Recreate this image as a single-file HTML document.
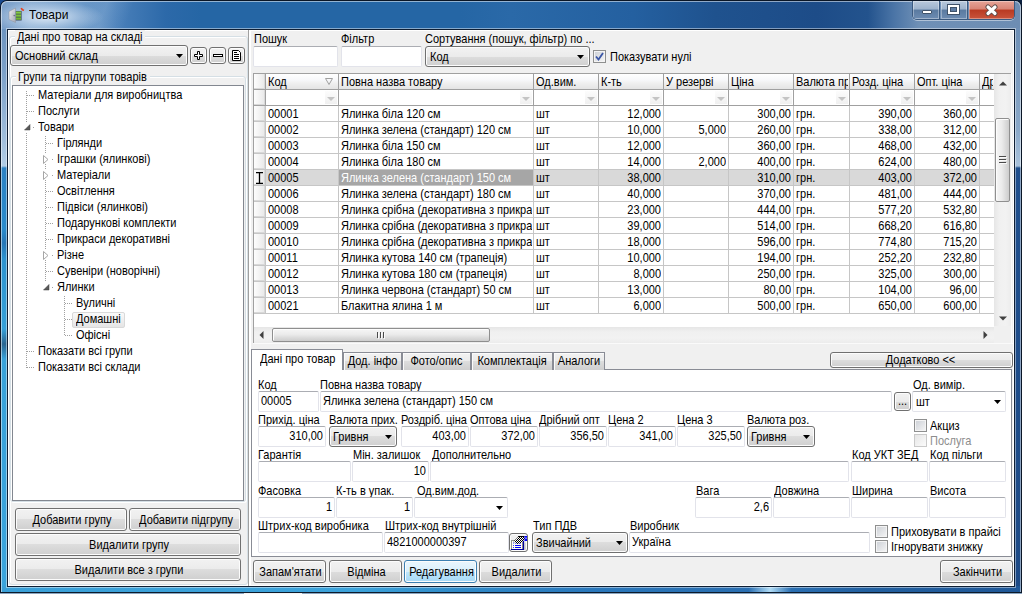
<!DOCTYPE html><html><head><meta charset="utf-8"><title>Товари</title><style>
*{margin:0;padding:0;box-sizing:border-box}
html,body{width:1022px;height:594px;overflow:hidden;background:#c9d3dc}
body{position:relative;font-family:"Liberation Sans",sans-serif;font-size:11px;color:#000}
div{position:absolute}
.t{white-space:nowrap;line-height:13px;transform:scaleY(1.12);transform-origin:0 10.3px}
.inp{background:#fff;border:1px solid #e2e3ea;border-top-color:#abadb3;border-radius:2px}
.btn{border:1px solid #707070;border-radius:3px;background:linear-gradient(#f2f2f2 0,#ebebeb 50%,#dddddd 50%,#cfcfcf 100%);box-shadow:inset 0 0 0 1px #fcfcfc}
.btnh{border:1px solid #3c7fb1;border-radius:3px;background:linear-gradient(#eaf6fd 0,#d9f0fc 50%,#bee6fd 50%,#a7d9f5 100%);box-shadow:inset 0 0 0 1px #fcfcfc}
.cb{border:1px solid #8e8f8f;background:linear-gradient(135deg,#cbcfd5,#f6f6f6);box-shadow:inset 0 0 0 1px #f4f4f4}
.ctr{text-align:center}
</style></head><body>
<div style="left:0px;top:593px;width:1022px;height:1px;background:#8aa5c0"></div>
<div style="left:244px;top:593px;width:58px;height:1px;background:#f4f4f4"></div>
<div style="left:0px;top:0px;width:12px;height:12px;background:#1a4a90"></div>
<div style="left:1010px;top:0px;width:12px;height:12px;background:#0a2040"></div>
<div style="left:0px;top:0px;width:1022px;height:593px;background:#0a1626;border-radius:7px 7px 0 0"></div>
<div style="left:1px;top:1px;width:1020px;height:591px;border-radius:6px 6px 0 0;background:linear-gradient(90deg,#7b9fc9 0,#8db0d5 30px,#6d9ac9 80px,#4a80ba 115px,#2c69a9 165px,#2566a5 200px,#2566a5 45%,#2a69a8 50%,#2460a0 62%,#1f528e 70%,#1d4c88 80%,#23538d 85%,#4a74a6 87.5%,#6f90b6 90%,#6d8db3 100%)"></div>
<div style="left:60px;top:1px;width:140px;height:27px;background:linear-gradient(110deg,rgba(255,255,255,0) 25px,rgba(220,235,250,.15) 45px,rgba(255,255,255,0) 70px)"></div>
<div style="left:0px;top:0px;width:140px;height:29px;background:radial-gradient(ellipse 56px 16px at 34% 58%,rgba(230,239,250,.9) 0,rgba(200,218,238,.5) 55%,rgba(160,190,220,0) 100%)"></div>
<div style="left:1px;top:29px;width:6px;height:564px;background:linear-gradient(#6c94c0 0,#7aa0c8 40px,#9fbedc 110px,#b2cde6 137px,#2c82c4 139px,#2a8bcb 200px,#2676b6 214px,#2d93cf 230px,#35a0d8 300px,#2a6590 315px,#38a2da 330px,#3aa4dc 100%)"></div>
<div style="left:1015px;top:29px;width:6px;height:564px;background:linear-gradient(#6e8fb5 0,#8aa8c8 100px,#a9c2db 137px,#1f4f8d 139px,#1d4a86 100%)"></div>
<div style="left:1px;top:586px;width:1020px;height:7px;background:linear-gradient(90deg,#3aa0d8 0,#3ba2da 35%,#2f8ac8 45%,#2a78bc 58%,#2a70b2 70%,#2a6fb2 73.3%,#b0dcf6 75.4%,#2a6fb2 77.5%,#2260a0 85%,#1f5797 100%)"></div>
<div style="left:1px;top:1px;width:1020px;height:591px;border:1px solid rgba(255,255,255,.5);border-bottom:none;border-radius:6px 6px 0 0"></div>
<div style="left:6px;top:28px;width:1010px;height:560px;border:1px solid rgba(255,255,255,.45)"></div>
<div style="left:0px;top:592px;width:1022px;height:1px;background:#0d1a2a"></div>
<div class="t" style="left:29px;top:8px;font-size:12px;line-height:15px;color:#000">Товари</div>
<svg style="position:absolute;left:8px;top:7px" width="17" height="17" viewBox="0 0 17 17">
<defs><linearGradient id="dg" x1="0" y1="0" x2="1" y2="1"><stop offset="0" stop-color="#f0f0f4"/><stop offset="1" stop-color="#a4a8b4"/></linearGradient></defs>
<path d="M1 4.5 L7.5 1 L7.5 15.5 L1 12.5 Z" fill="url(#dg)" stroke="#8c909c" stroke-width=".5"/>
<rect x="7.8" y="4" width="5.8" height="9.5" fill="#3c4a5c"/>
<rect x="8" y="4.5" width="5" height="2.2" fill="#84c840"/><rect x="8" y="7.5" width="5" height="2.2" fill="#7cc238"/><rect x="8" y="10.5" width="5" height="2.2" fill="#74b832"/>
<circle cx="6.2" cy="8.6" r=".8" fill="#6a7080"/>
<path d="M12.5 1.2 L14 0.8 L15 2.2 L16.2 2.4 L15.8 3.9 L13.8 3.6 Z" fill="#e8401c"/></svg>
<div style="left:912px;top:1px;width:103px;height:19px;border:1px solid #3b5a80;border-top:none;border-radius:0 0 5px 5px;overflow:hidden;box-shadow:0 1px 0 rgba(255,255,255,.45)"><div style="left:0;top:0;width:27px;height:18px;background:linear-gradient(#b9c9dc 0,#9db3cc 45%,#5a7aa0 50%,#6d8cb2 100%);border-right:1px solid #3b5a80;box-shadow:inset 0 0 0 1px rgba(255,255,255,.35)"></div><div style="left:28px;top:0;width:27px;height:18px;background:linear-gradient(#b9c9dc 0,#9db3cc 45%,#5a7aa0 50%,#6d8cb2 100%);border-right:1px solid #3b5a80;box-shadow:inset 0 0 0 1px rgba(255,255,255,.35)"></div><div style="left:56px;top:0;width:46px;height:18px;background:linear-gradient(#e6a498 0,#d88475 45%,#b93a22 50%,#c9543c 100%);box-shadow:inset 0 0 0 1px rgba(255,255,255,.35)"></div></div>
<div style="left:922px;top:10px;width:10px;height:4px;background:#fff;border:1px solid #40536a;border-radius:1px"></div>
<div style="left:948px;top:5px;width:11px;height:9px;border:2px solid #fff;outline:1px solid #40536a;background:transparent"></div>
<div style="left:950px;top:7px;width:7px;height:5px;background:#5d7ca3;border:1px solid #40536a"></div>
<svg style="position:absolute;left:984px;top:3px" width="15" height="14" viewBox="0 0 15 14"><path d="M4 4 L11 10.5 M11 4 L4 10.5" stroke="#5b4a48" stroke-width="5" stroke-linecap="round"/><path d="M4 4 L11 10.5 M11 4 L4 10.5" stroke="#ffffff" stroke-width="3.2" stroke-linecap="round"/></svg>
<div style="left:7px;top:29px;width:1008px;height:558px;background:#f0f0f0;border:1px solid #0e1e33;box-shadow:inset 1px 1px 0 #ffffff,inset -1px -1px 0 #ffffff"></div>
<div style="left:9px;top:36px;width:239px;height:549px;border:1px solid #d5dfe5;border-radius:3px;box-shadow:inset 1px 1px 0 #fff, 1px 1px 0 #fff"></div>
<div style="left:15px;top:30px;width:130px;height:13px;background:#f0f0f0"></div>
<div class="t" style="left:17px;top:31px;">Дані про товар на складі</div>
<div class="btn" style="left:10px;top:45px;width:178px;height:21px"></div>
<div class="t" style="left:15px;top:50px;">Основний склад</div>
<svg style="position:absolute;left:176px;top:54px" width="7" height="4"><path d="M0 0 H7 L3.5 4 Z" fill="#000"/></svg>
<div class="btn" style="left:190px;top:47px;width:17px;height:17px"></div>
<div class="btn" style="left:209px;top:47px;width:17px;height:17px"></div>
<div class="btn" style="left:228px;top:47px;width:17px;height:17px"></div>
<svg style="position:absolute;left:194px;top:51px" width="9" height="9"><path d="M3.5 0.5 H5.5 V3.5 H8.5 V5.5 H5.5 V8.5 H3.5 V5.5 H0.5 V3.5 H3.5 Z" fill="#fff" stroke="#000" stroke-width="1"/></svg>
<svg style="position:absolute;left:213px;top:54px" width="10" height="4"><rect x="0.5" y="0.5" width="9" height="2" fill="#fff" stroke="#000"/></svg>
<svg style="position:absolute;left:232px;top:50px" width="9" height="11"><path d="M0.5 0.5 H6.5 L8.5 2.5 V10.5 H0.5 Z" fill="#fff" stroke="#000" stroke-width="1"/><path d="M2 2.5 H5 M2 4.5 H7 M2 6.5 H7 M2 8.5 H7" stroke="#000" stroke-width="1"/></svg>
<div style="left:10px;top:76px;width:236px;height:426px;border:1px solid #d5dfe5;border-radius:3px;box-shadow:inset 1px 1px 0 #fff, 1px 1px 0 #fff"></div>
<div style="left:16px;top:70px;width:134px;height:13px;background:#f0f0f0"></div>
<div class="t" style="left:18px;top:71px;">Групи та підгрупи товарів</div>
<div style="left:12px;top:85px;width:232px;height:416px;background:#fff;border:1px solid #828790"></div>
<div style="left:26px;top:91px;width:1px;height:277px;background:repeating-linear-gradient(180deg,#a0a0a0 0,#a0a0a0 1px,transparent 1px,transparent 2px)"></div>
<div style="left:45px;top:136px;width:1px;height:152px;background:repeating-linear-gradient(180deg,#a0a0a0 0,#a0a0a0 1px,transparent 1px,transparent 2px)"></div>
<div style="left:64px;top:296px;width:1px;height:40px;background:repeating-linear-gradient(180deg,#a0a0a0 0,#a0a0a0 1px,transparent 1px,transparent 2px)"></div>
<div style="left:27px;top:95px;width:8px;height:1px;background:repeating-linear-gradient(90deg,#a0a0a0 0,#a0a0a0 1px,transparent 1px,transparent 2px)"></div>
<div class="t" style="left:38px;top:89px;">Матеріали для виробництва</div>
<div style="left:27px;top:111px;width:8px;height:1px;background:repeating-linear-gradient(90deg,#a0a0a0 0,#a0a0a0 1px,transparent 1px,transparent 2px)"></div>
<div class="t" style="left:38px;top:105px;">Послуги</div>
<div style="left:33px;top:127px;width:1px;height:1px;background:#a0a0a0"></div>
<div style="left:23px;top:122px;width:9px;height:10px;background:#fff"></div>
<svg style="position:absolute;left:24px;top:124px" width="7" height="7"><path d="M6 0.5 V6 H0.5 Z" fill="#595959" stroke="#3c3c3c" stroke-width=".5"/></svg>
<div class="t" style="left:38px;top:121px;">Товари</div>
<div style="left:46px;top:143px;width:8px;height:1px;background:repeating-linear-gradient(90deg,#a0a0a0 0,#a0a0a0 1px,transparent 1px,transparent 2px)"></div>
<div class="t" style="left:57px;top:137px;">Гірлянди</div>
<div style="left:52px;top:159px;width:1px;height:1px;background:#a0a0a0"></div>
<div style="left:42px;top:154px;width:9px;height:10px;background:#fff"></div>
<svg style="position:absolute;left:43px;top:155px" width="6" height="9"><path d="M0.5 0.5 L5 4.5 L0.5 8.5 Z" fill="#fff" stroke="#a6a6a6"/></svg>
<div class="t" style="left:57px;top:153px;">Іграшки (ялинкові)</div>
<div style="left:52px;top:175px;width:1px;height:1px;background:#a0a0a0"></div>
<div style="left:42px;top:170px;width:9px;height:10px;background:#fff"></div>
<svg style="position:absolute;left:43px;top:171px" width="6" height="9"><path d="M0.5 0.5 L5 4.5 L0.5 8.5 Z" fill="#fff" stroke="#a6a6a6"/></svg>
<div class="t" style="left:57px;top:169px;">Матеріали</div>
<div style="left:46px;top:191px;width:8px;height:1px;background:repeating-linear-gradient(90deg,#a0a0a0 0,#a0a0a0 1px,transparent 1px,transparent 2px)"></div>
<div class="t" style="left:57px;top:185px;">Освітлення</div>
<div style="left:46px;top:207px;width:8px;height:1px;background:repeating-linear-gradient(90deg,#a0a0a0 0,#a0a0a0 1px,transparent 1px,transparent 2px)"></div>
<div class="t" style="left:57px;top:201px;">Підвіси (ялинкові)</div>
<div style="left:46px;top:223px;width:8px;height:1px;background:repeating-linear-gradient(90deg,#a0a0a0 0,#a0a0a0 1px,transparent 1px,transparent 2px)"></div>
<div class="t" style="left:57px;top:217px;">Подарункові комплекти</div>
<div style="left:46px;top:239px;width:8px;height:1px;background:repeating-linear-gradient(90deg,#a0a0a0 0,#a0a0a0 1px,transparent 1px,transparent 2px)"></div>
<div class="t" style="left:57px;top:233px;">Прикраси декоративні</div>
<div style="left:52px;top:255px;width:1px;height:1px;background:#a0a0a0"></div>
<div style="left:42px;top:250px;width:9px;height:10px;background:#fff"></div>
<svg style="position:absolute;left:43px;top:251px" width="6" height="9"><path d="M0.5 0.5 L5 4.5 L0.5 8.5 Z" fill="#fff" stroke="#a6a6a6"/></svg>
<div class="t" style="left:57px;top:249px;">Різне</div>
<div style="left:46px;top:271px;width:8px;height:1px;background:repeating-linear-gradient(90deg,#a0a0a0 0,#a0a0a0 1px,transparent 1px,transparent 2px)"></div>
<div class="t" style="left:57px;top:265px;">Сувеніри (новорічні)</div>
<div style="left:52px;top:287px;width:1px;height:1px;background:#a0a0a0"></div>
<div style="left:42px;top:282px;width:9px;height:10px;background:#fff"></div>
<svg style="position:absolute;left:43px;top:284px" width="7" height="7"><path d="M6 0.5 V6 H0.5 Z" fill="#595959" stroke="#3c3c3c" stroke-width=".5"/></svg>
<div class="t" style="left:57px;top:281px;">Ялинки</div>
<div style="left:65px;top:303px;width:8px;height:1px;background:repeating-linear-gradient(90deg,#a0a0a0 0,#a0a0a0 1px,transparent 1px,transparent 2px)"></div>
<div class="t" style="left:76px;top:297px;">Вуличні</div>
<div style="left:65px;top:319px;width:8px;height:1px;background:repeating-linear-gradient(90deg,#a0a0a0 0,#a0a0a0 1px,transparent 1px,transparent 2px)"></div>
<div style="left:72px;top:312px;width:53px;height:16px;border:1px solid #d9d9d9;border-radius:2px;background:linear-gradient(#fafafa,#e5e5e5)"></div>
<div class="t" style="left:76px;top:313px;">Домашні</div>
<div style="left:65px;top:335px;width:8px;height:1px;background:repeating-linear-gradient(90deg,#a0a0a0 0,#a0a0a0 1px,transparent 1px,transparent 2px)"></div>
<div class="t" style="left:76px;top:329px;">Офісні</div>
<div style="left:27px;top:351px;width:8px;height:1px;background:repeating-linear-gradient(90deg,#a0a0a0 0,#a0a0a0 1px,transparent 1px,transparent 2px)"></div>
<div class="t" style="left:38px;top:345px;">Показати всі групи</div>
<div style="left:27px;top:367px;width:8px;height:1px;background:repeating-linear-gradient(90deg,#a0a0a0 0,#a0a0a0 1px,transparent 1px,transparent 2px)"></div>
<div class="t" style="left:38px;top:361px;">Показати всі склади</div>
<div class="btn" style="left:15px;top:508px;width:112px;height:23px"></div>
<div class="t" style="left:16px;top:514px;width:112px;text-align:center">Добавити групу</div>
<div class="btn" style="left:129px;top:508px;width:112px;height:23px"></div>
<div class="t" style="left:130px;top:514px;width:112px;text-align:center">Добавити підгрупу</div>
<div class="btn" style="left:15px;top:533px;width:226px;height:23px"></div>
<div class="t" style="left:16px;top:539px;width:226px;text-align:center">Видалити групу</div>
<div class="btn" style="left:15px;top:558px;width:226px;height:23px"></div>
<div class="t" style="left:16px;top:564px;width:226px;text-align:center">Видалити все з групи</div>
<div style="left:248px;top:30px;width:1px;height:556px;background:#a0a0a0"></div>
<div style="left:249px;top:30px;width:2px;height:556px;background:#fff"></div>
<div class="t" style="left:254px;top:33px;">Пошук</div>
<div class="inp" style="left:253px;top:46px;width:85px;height:21px"></div>
<div class="t" style="left:341px;top:33px;">Фільтр</div>
<div class="inp" style="left:341px;top:46px;width:81px;height:21px"></div>
<div class="t" style="left:425px;top:33px;">Сортування (пошук, фільтр) по ...</div>
<div class="btn" style="left:425px;top:46px;width:165px;height:21px"></div>
<div class="t" style="left:430px;top:51px;">Код</div>
<svg style="position:absolute;left:577px;top:55px" width="7" height="4"><path d="M0 0 H7 L3.5 4 Z" fill="#000"/></svg>
<div class="cb" style="left:593px;top:50px;width:13px;height:13px"></div>
<svg style="position:absolute;left:595px;top:52px" width="9" height="9"><path d="M1 4.5 L3.5 7.5 L8 1" fill="none" stroke="#3a56a6" stroke-width="1.8"/></svg>
<div class="t" style="left:610px;top:51px;">Показувати нулі</div>
<div style="left:253px;top:73px;width:759px;height:271px;background:#fff;border:1px solid #a0a0a0;border-right:none;border-bottom:none"></div>
<div style="left:254px;top:74px;width:740px;height:15px;background:linear-gradient(#ffffff 0,#f7f8fa 40%,#f0f0f0 60%,#e4e4e4 100%)"></div>
<div style="left:254px;top:89px;width:740px;height:1px;background:#a0a0a0"></div>
<div style="left:254px;top:105px;width:740px;height:1px;background:#a0a0a0"></div>
<div style="left:266px;top:170px;width:728px;height:15px;background:#d9d9d9"></div>
<div style="left:339px;top:170px;width:194px;height:15px;background:#a6a6a6"></div>
<div style="left:254px;top:121px;width:740px;height:1px;background:#c6c6c6"></div>
<div style="left:254px;top:137px;width:740px;height:1px;background:#c6c6c6"></div>
<div style="left:254px;top:153px;width:740px;height:1px;background:#c6c6c6"></div>
<div style="left:254px;top:169px;width:740px;height:1px;background:#c6c6c6"></div>
<div style="left:254px;top:185px;width:740px;height:1px;background:#c6c6c6"></div>
<div style="left:254px;top:201px;width:740px;height:1px;background:#c6c6c6"></div>
<div style="left:254px;top:217px;width:740px;height:1px;background:#c6c6c6"></div>
<div style="left:254px;top:233px;width:740px;height:1px;background:#c6c6c6"></div>
<div style="left:254px;top:249px;width:740px;height:1px;background:#c6c6c6"></div>
<div style="left:254px;top:265px;width:740px;height:1px;background:#c6c6c6"></div>
<div style="left:254px;top:281px;width:740px;height:1px;background:#c6c6c6"></div>
<div style="left:254px;top:297px;width:740px;height:1px;background:#c6c6c6"></div>
<div style="left:254px;top:313px;width:740px;height:1px;background:#c6c6c6"></div>
<div style="left:254px;top:74px;width:11px;height:15px;background:linear-gradient(90deg,#fdfdfd,#e8e8e8);box-shadow:inset -1px -1px 0 #d8d8d8"></div>
<div style="left:254px;top:90px;width:11px;height:15px;background:linear-gradient(90deg,#fdfdfd,#e8e8e8);box-shadow:inset -1px -1px 0 #d8d8d8"></div>
<div style="left:254px;top:106px;width:11px;height:15px;background:linear-gradient(90deg,#fdfdfd,#e8e8e8);box-shadow:inset -1px -1px 0 #d8d8d8"></div>
<div style="left:254px;top:122px;width:11px;height:15px;background:linear-gradient(90deg,#fdfdfd,#e8e8e8);box-shadow:inset -1px -1px 0 #d8d8d8"></div>
<div style="left:254px;top:138px;width:11px;height:15px;background:linear-gradient(90deg,#fdfdfd,#e8e8e8);box-shadow:inset -1px -1px 0 #d8d8d8"></div>
<div style="left:254px;top:154px;width:11px;height:15px;background:linear-gradient(90deg,#fdfdfd,#e8e8e8);box-shadow:inset -1px -1px 0 #d8d8d8"></div>
<div style="left:254px;top:170px;width:11px;height:15px;background:linear-gradient(90deg,#fdfdfd,#e8e8e8);box-shadow:inset -1px -1px 0 #d8d8d8"></div>
<div style="left:254px;top:186px;width:11px;height:15px;background:linear-gradient(90deg,#fdfdfd,#e8e8e8);box-shadow:inset -1px -1px 0 #d8d8d8"></div>
<div style="left:254px;top:202px;width:11px;height:15px;background:linear-gradient(90deg,#fdfdfd,#e8e8e8);box-shadow:inset -1px -1px 0 #d8d8d8"></div>
<div style="left:254px;top:218px;width:11px;height:15px;background:linear-gradient(90deg,#fdfdfd,#e8e8e8);box-shadow:inset -1px -1px 0 #d8d8d8"></div>
<div style="left:254px;top:234px;width:11px;height:15px;background:linear-gradient(90deg,#fdfdfd,#e8e8e8);box-shadow:inset -1px -1px 0 #d8d8d8"></div>
<div style="left:254px;top:250px;width:11px;height:15px;background:linear-gradient(90deg,#fdfdfd,#e8e8e8);box-shadow:inset -1px -1px 0 #d8d8d8"></div>
<div style="left:254px;top:266px;width:11px;height:15px;background:linear-gradient(90deg,#fdfdfd,#e8e8e8);box-shadow:inset -1px -1px 0 #d8d8d8"></div>
<div style="left:254px;top:282px;width:11px;height:15px;background:linear-gradient(90deg,#fdfdfd,#e8e8e8);box-shadow:inset -1px -1px 0 #d8d8d8"></div>
<div style="left:254px;top:298px;width:11px;height:15px;background:linear-gradient(90deg,#fdfdfd,#e8e8e8);box-shadow:inset -1px -1px 0 #d8d8d8"></div>
<div style="left:265px;top:74px;width:1px;height:31px;background:#a0a0a0"></div>
<div style="left:265px;top:106px;width:1px;height:207px;background:#c6c6c6"></div>
<div style="left:338px;top:74px;width:1px;height:31px;background:#a0a0a0"></div>
<div style="left:338px;top:106px;width:1px;height:207px;background:#c6c6c6"></div>
<div style="left:533px;top:74px;width:1px;height:31px;background:#a0a0a0"></div>
<div style="left:533px;top:106px;width:1px;height:207px;background:#c6c6c6"></div>
<div style="left:598px;top:74px;width:1px;height:31px;background:#a0a0a0"></div>
<div style="left:598px;top:106px;width:1px;height:207px;background:#c6c6c6"></div>
<div style="left:663px;top:74px;width:1px;height:31px;background:#a0a0a0"></div>
<div style="left:663px;top:106px;width:1px;height:207px;background:#c6c6c6"></div>
<div style="left:728px;top:74px;width:1px;height:31px;background:#a0a0a0"></div>
<div style="left:728px;top:106px;width:1px;height:207px;background:#c6c6c6"></div>
<div style="left:793px;top:74px;width:1px;height:31px;background:#a0a0a0"></div>
<div style="left:793px;top:106px;width:1px;height:207px;background:#c6c6c6"></div>
<div style="left:849px;top:74px;width:1px;height:31px;background:#a0a0a0"></div>
<div style="left:849px;top:106px;width:1px;height:207px;background:#c6c6c6"></div>
<div style="left:914px;top:74px;width:1px;height:31px;background:#a0a0a0"></div>
<div style="left:914px;top:106px;width:1px;height:207px;background:#c6c6c6"></div>
<div style="left:979px;top:74px;width:1px;height:31px;background:#a0a0a0"></div>
<div style="left:979px;top:106px;width:1px;height:207px;background:#c6c6c6"></div>
<div class="t" style="left:268px;top:76px;width:69px;overflow:hidden">Код</div>
<div class="t" style="left:341px;top:76px;width:191px;overflow:hidden">Повна назва товару</div>
<div class="t" style="left:536px;top:76px;width:61px;overflow:hidden">Од.вим.</div>
<div class="t" style="left:601px;top:76px;width:61px;overflow:hidden">К-ть</div>
<div class="t" style="left:666px;top:76px;width:61px;overflow:hidden">У резерві</div>
<div class="t" style="left:731px;top:76px;width:61px;overflow:hidden">Ціна</div>
<div class="t" style="left:796px;top:76px;width:52px;overflow:hidden">Валюта пр</div>
<div class="t" style="left:852px;top:76px;width:61px;overflow:hidden">Розд. ціна</div>
<div class="t" style="left:917px;top:76px;width:61px;overflow:hidden">Опт. ціна</div>
<div class="t" style="left:982px;top:76px;width:11px;overflow:hidden">Др</div>
<svg style="position:absolute;left:325px;top:78px" width="8" height="7"><path d="M0.5 0.5 H7.5 L4 6.5 Z" fill="none" stroke="#a0a0a0"/></svg>
<div style="left:325px;top:91px;width:12px;height:13px;background:linear-gradient(#fcfcfc,#f0f0f0)"></div>
<svg style="position:absolute;left:327px;top:97px" width="8" height="4"><path d="M0 0 H8 L4 4 Z" fill="#c4c4c4"/></svg>
<div style="left:520px;top:91px;width:12px;height:13px;background:linear-gradient(#fcfcfc,#f0f0f0)"></div>
<svg style="position:absolute;left:522px;top:97px" width="8" height="4"><path d="M0 0 H8 L4 4 Z" fill="#c4c4c4"/></svg>
<div style="left:585px;top:91px;width:12px;height:13px;background:linear-gradient(#fcfcfc,#f0f0f0)"></div>
<svg style="position:absolute;left:587px;top:97px" width="8" height="4"><path d="M0 0 H8 L4 4 Z" fill="#c4c4c4"/></svg>
<div style="left:650px;top:91px;width:12px;height:13px;background:linear-gradient(#fcfcfc,#f0f0f0)"></div>
<svg style="position:absolute;left:652px;top:97px" width="8" height="4"><path d="M0 0 H8 L4 4 Z" fill="#c4c4c4"/></svg>
<div style="left:715px;top:91px;width:12px;height:13px;background:linear-gradient(#fcfcfc,#f0f0f0)"></div>
<svg style="position:absolute;left:717px;top:97px" width="8" height="4"><path d="M0 0 H8 L4 4 Z" fill="#c4c4c4"/></svg>
<div style="left:780px;top:91px;width:12px;height:13px;background:linear-gradient(#fcfcfc,#f0f0f0)"></div>
<svg style="position:absolute;left:782px;top:97px" width="8" height="4"><path d="M0 0 H8 L4 4 Z" fill="#c4c4c4"/></svg>
<div style="left:836px;top:91px;width:12px;height:13px;background:linear-gradient(#fcfcfc,#f0f0f0)"></div>
<svg style="position:absolute;left:838px;top:97px" width="8" height="4"><path d="M0 0 H8 L4 4 Z" fill="#c4c4c4"/></svg>
<div style="left:901px;top:91px;width:12px;height:13px;background:linear-gradient(#fcfcfc,#f0f0f0)"></div>
<svg style="position:absolute;left:903px;top:97px" width="8" height="4"><path d="M0 0 H8 L4 4 Z" fill="#c4c4c4"/></svg>
<div style="left:966px;top:91px;width:12px;height:13px;background:linear-gradient(#fcfcfc,#f0f0f0)"></div>
<svg style="position:absolute;left:968px;top:97px" width="8" height="4"><path d="M0 0 H8 L4 4 Z" fill="#c4c4c4"/></svg>
<div class="t" style="left:268px;top:108px;width:69px;overflow:hidden;color:#000">00001</div>
<div class="t" style="left:341px;top:108px;width:191px;overflow:hidden;color:#000">Ялинка біла 120 см</div>
<div class="t" style="left:536px;top:108px;width:61px;overflow:hidden;color:#000">шт</div>
<div class="t" style="left:599px;top:108px;width:62px;text-align:right;color:#000">12,000</div>
<div class="t" style="left:729px;top:108px;width:62px;text-align:right;color:#000">300,00</div>
<div class="t" style="left:796px;top:108px;width:52px;overflow:hidden;color:#000">грн.</div>
<div class="t" style="left:850px;top:108px;width:62px;text-align:right;color:#000">390,00</div>
<div class="t" style="left:915px;top:108px;width:62px;text-align:right;color:#000">360,00</div>
<div class="t" style="left:268px;top:124px;width:69px;overflow:hidden;color:#000">00002</div>
<div class="t" style="left:341px;top:124px;width:191px;overflow:hidden;color:#000">Ялинка зелена (стандарт) 120 см</div>
<div class="t" style="left:536px;top:124px;width:61px;overflow:hidden;color:#000">шт</div>
<div class="t" style="left:599px;top:124px;width:62px;text-align:right;color:#000">10,000</div>
<div class="t" style="left:664px;top:124px;width:62px;text-align:right;color:#000">5,000</div>
<div class="t" style="left:729px;top:124px;width:62px;text-align:right;color:#000">260,00</div>
<div class="t" style="left:796px;top:124px;width:52px;overflow:hidden;color:#000">грн.</div>
<div class="t" style="left:850px;top:124px;width:62px;text-align:right;color:#000">338,00</div>
<div class="t" style="left:915px;top:124px;width:62px;text-align:right;color:#000">312,00</div>
<div class="t" style="left:268px;top:140px;width:69px;overflow:hidden;color:#000">00003</div>
<div class="t" style="left:341px;top:140px;width:191px;overflow:hidden;color:#000">Ялинка біла 150 см</div>
<div class="t" style="left:536px;top:140px;width:61px;overflow:hidden;color:#000">шт</div>
<div class="t" style="left:599px;top:140px;width:62px;text-align:right;color:#000">12,000</div>
<div class="t" style="left:729px;top:140px;width:62px;text-align:right;color:#000">360,00</div>
<div class="t" style="left:796px;top:140px;width:52px;overflow:hidden;color:#000">грн.</div>
<div class="t" style="left:850px;top:140px;width:62px;text-align:right;color:#000">468,00</div>
<div class="t" style="left:915px;top:140px;width:62px;text-align:right;color:#000">432,00</div>
<div class="t" style="left:268px;top:156px;width:69px;overflow:hidden;color:#000">00004</div>
<div class="t" style="left:341px;top:156px;width:191px;overflow:hidden;color:#000">Ялинка біла 180 см</div>
<div class="t" style="left:536px;top:156px;width:61px;overflow:hidden;color:#000">шт</div>
<div class="t" style="left:599px;top:156px;width:62px;text-align:right;color:#000">14,000</div>
<div class="t" style="left:664px;top:156px;width:62px;text-align:right;color:#000">2,000</div>
<div class="t" style="left:729px;top:156px;width:62px;text-align:right;color:#000">400,00</div>
<div class="t" style="left:796px;top:156px;width:52px;overflow:hidden;color:#000">грн.</div>
<div class="t" style="left:850px;top:156px;width:62px;text-align:right;color:#000">624,00</div>
<div class="t" style="left:915px;top:156px;width:62px;text-align:right;color:#000">480,00</div>
<div class="t" style="left:268px;top:172px;width:69px;overflow:hidden;color:#000">00005</div>
<div class="t" style="left:341px;top:172px;width:191px;overflow:hidden;color:#fff">Ялинка зелена (стандарт) 150 см</div>
<div class="t" style="left:536px;top:172px;width:61px;overflow:hidden;color:#000">шт</div>
<div class="t" style="left:599px;top:172px;width:62px;text-align:right;color:#000">38,000</div>
<div class="t" style="left:729px;top:172px;width:62px;text-align:right;color:#000">310,00</div>
<div class="t" style="left:796px;top:172px;width:52px;overflow:hidden;color:#000">грн.</div>
<div class="t" style="left:850px;top:172px;width:62px;text-align:right;color:#000">403,00</div>
<div class="t" style="left:915px;top:172px;width:62px;text-align:right;color:#000">372,00</div>
<div class="t" style="left:268px;top:188px;width:69px;overflow:hidden;color:#000">00006</div>
<div class="t" style="left:341px;top:188px;width:191px;overflow:hidden;color:#000">Ялинка зелена (стандарт) 180 см</div>
<div class="t" style="left:536px;top:188px;width:61px;overflow:hidden;color:#000">шт</div>
<div class="t" style="left:599px;top:188px;width:62px;text-align:right;color:#000">40,000</div>
<div class="t" style="left:729px;top:188px;width:62px;text-align:right;color:#000">370,00</div>
<div class="t" style="left:796px;top:188px;width:52px;overflow:hidden;color:#000">грн.</div>
<div class="t" style="left:850px;top:188px;width:62px;text-align:right;color:#000">481,00</div>
<div class="t" style="left:915px;top:188px;width:62px;text-align:right;color:#000">444,00</div>
<div class="t" style="left:268px;top:204px;width:69px;overflow:hidden;color:#000">00008</div>
<div class="t" style="left:341px;top:204px;width:191px;overflow:hidden;color:#000">Ялинка срібна (декоративна з прикра</div>
<div class="t" style="left:536px;top:204px;width:61px;overflow:hidden;color:#000">шт</div>
<div class="t" style="left:599px;top:204px;width:62px;text-align:right;color:#000">23,000</div>
<div class="t" style="left:729px;top:204px;width:62px;text-align:right;color:#000">444,00</div>
<div class="t" style="left:796px;top:204px;width:52px;overflow:hidden;color:#000">грн.</div>
<div class="t" style="left:850px;top:204px;width:62px;text-align:right;color:#000">577,20</div>
<div class="t" style="left:915px;top:204px;width:62px;text-align:right;color:#000">532,80</div>
<div class="t" style="left:268px;top:220px;width:69px;overflow:hidden;color:#000">00009</div>
<div class="t" style="left:341px;top:220px;width:191px;overflow:hidden;color:#000">Ялинка срібна (декоративна з прикра</div>
<div class="t" style="left:536px;top:220px;width:61px;overflow:hidden;color:#000">шт</div>
<div class="t" style="left:599px;top:220px;width:62px;text-align:right;color:#000">39,000</div>
<div class="t" style="left:729px;top:220px;width:62px;text-align:right;color:#000">514,00</div>
<div class="t" style="left:796px;top:220px;width:52px;overflow:hidden;color:#000">грн.</div>
<div class="t" style="left:850px;top:220px;width:62px;text-align:right;color:#000">668,20</div>
<div class="t" style="left:915px;top:220px;width:62px;text-align:right;color:#000">616,80</div>
<div class="t" style="left:268px;top:236px;width:69px;overflow:hidden;color:#000">00010</div>
<div class="t" style="left:341px;top:236px;width:191px;overflow:hidden;color:#000">Ялинка срібна (декоративна з прикра</div>
<div class="t" style="left:536px;top:236px;width:61px;overflow:hidden;color:#000">шт</div>
<div class="t" style="left:599px;top:236px;width:62px;text-align:right;color:#000">18,000</div>
<div class="t" style="left:729px;top:236px;width:62px;text-align:right;color:#000">596,00</div>
<div class="t" style="left:796px;top:236px;width:52px;overflow:hidden;color:#000">грн.</div>
<div class="t" style="left:850px;top:236px;width:62px;text-align:right;color:#000">774,80</div>
<div class="t" style="left:915px;top:236px;width:62px;text-align:right;color:#000">715,20</div>
<div class="t" style="left:268px;top:252px;width:69px;overflow:hidden;color:#000">00011</div>
<div class="t" style="left:341px;top:252px;width:191px;overflow:hidden;color:#000">Ялинка кутова 140 см (трапеція)</div>
<div class="t" style="left:536px;top:252px;width:61px;overflow:hidden;color:#000">шт</div>
<div class="t" style="left:599px;top:252px;width:62px;text-align:right;color:#000">10,000</div>
<div class="t" style="left:729px;top:252px;width:62px;text-align:right;color:#000">194,00</div>
<div class="t" style="left:796px;top:252px;width:52px;overflow:hidden;color:#000">грн.</div>
<div class="t" style="left:850px;top:252px;width:62px;text-align:right;color:#000">252,20</div>
<div class="t" style="left:915px;top:252px;width:62px;text-align:right;color:#000">232,80</div>
<div class="t" style="left:268px;top:268px;width:69px;overflow:hidden;color:#000">00012</div>
<div class="t" style="left:341px;top:268px;width:191px;overflow:hidden;color:#000">Ялинка кутова 180 см (трапеція)</div>
<div class="t" style="left:536px;top:268px;width:61px;overflow:hidden;color:#000">шт</div>
<div class="t" style="left:599px;top:268px;width:62px;text-align:right;color:#000">8,000</div>
<div class="t" style="left:729px;top:268px;width:62px;text-align:right;color:#000">250,00</div>
<div class="t" style="left:796px;top:268px;width:52px;overflow:hidden;color:#000">грн.</div>
<div class="t" style="left:850px;top:268px;width:62px;text-align:right;color:#000">325,00</div>
<div class="t" style="left:915px;top:268px;width:62px;text-align:right;color:#000">300,00</div>
<div class="t" style="left:268px;top:284px;width:69px;overflow:hidden;color:#000">00013</div>
<div class="t" style="left:341px;top:284px;width:191px;overflow:hidden;color:#000">Ялинка червона (стандарт) 50 см</div>
<div class="t" style="left:536px;top:284px;width:61px;overflow:hidden;color:#000">шт</div>
<div class="t" style="left:599px;top:284px;width:62px;text-align:right;color:#000">13,000</div>
<div class="t" style="left:729px;top:284px;width:62px;text-align:right;color:#000">80,00</div>
<div class="t" style="left:796px;top:284px;width:52px;overflow:hidden;color:#000">грн.</div>
<div class="t" style="left:850px;top:284px;width:62px;text-align:right;color:#000">104,00</div>
<div class="t" style="left:915px;top:284px;width:62px;text-align:right;color:#000">96,00</div>
<div class="t" style="left:268px;top:300px;width:69px;overflow:hidden;color:#000">00021</div>
<div class="t" style="left:341px;top:300px;width:191px;overflow:hidden;color:#000">Блакитна ялина 1 м</div>
<div class="t" style="left:536px;top:300px;width:61px;overflow:hidden;color:#000">шт</div>
<div class="t" style="left:599px;top:300px;width:62px;text-align:right;color:#000">6,000</div>
<div class="t" style="left:729px;top:300px;width:62px;text-align:right;color:#000">500,00</div>
<div class="t" style="left:796px;top:300px;width:52px;overflow:hidden;color:#000">грн.</div>
<div class="t" style="left:850px;top:300px;width:62px;text-align:right;color:#000">650,00</div>
<div class="t" style="left:915px;top:300px;width:62px;text-align:right;color:#000">600,00</div>
<svg style="position:absolute;left:256px;top:172px" width="8" height="12"><path d="M0 0.5 H7 M0 11.5 H7 M3.5 0.5 V11.5" stroke="#000" stroke-width="1.3"/></svg>
<div style="left:994px;top:74px;width:17px;height:252px;background:linear-gradient(90deg,#e6e6e6,#f0f0f0 30%,#f2f2f2 70%,#ececec)"></div>
<svg style="position:absolute;left:999px;top:81px" width="8" height="5"><path d="M0 4.5 L4 0.5 L8 4.5 Z" fill="#404040"/></svg>
<svg style="position:absolute;left:999px;top:316px" width="8" height="5"><path d="M0 0.5 L4 4.5 L8 0.5 Z" fill="#404040"/></svg>
<div style="left:995px;top:118px;width:15px;height:84px;border:1px solid #8f8f8f;border-radius:2px;background:linear-gradient(90deg,#f6f6f6,#ebebeb 45%,#dadada 75%,#cdcdcd);box-shadow:inset 1px 1px 0 #fdfdfd"></div>
<div style="left:999px;top:156px;width:7px;height:1px;background:#4a4a4a"></div>
<div style="left:1000px;top:157px;width:7px;height:1px;background:rgba(255,255,255,.8)"></div>
<div style="left:999px;top:159px;width:7px;height:1px;background:#4a4a4a"></div>
<div style="left:1000px;top:160px;width:7px;height:1px;background:rgba(255,255,255,.8)"></div>
<div style="left:999px;top:162px;width:7px;height:1px;background:#4a4a4a"></div>
<div style="left:1000px;top:163px;width:7px;height:1px;background:rgba(255,255,255,.8)"></div>
<div style="left:254px;top:327px;width:740px;height:16px;background:linear-gradient(#e6e6e6,#f0f0f0 30%,#f2f2f2 70%,#ececec)"></div>
<div style="left:994px;top:326px;width:17px;height:17px;background:#f0f0f0"></div>
<svg style="position:absolute;left:259px;top:331px" width="5" height="8"><path d="M4.5 0 L0.5 4 L4.5 8 Z" fill="#404040"/></svg>
<svg style="position:absolute;left:983px;top:331px" width="5" height="8"><path d="M0.5 0 L4.5 4 L0.5 8 Z" fill="#404040"/></svg>
<div style="left:272px;top:328px;width:218px;height:14px;border:1px solid #8f8f8f;border-radius:2px;background:linear-gradient(#f6f6f6,#ebebeb 45%,#dadada 75%,#cdcdcd);box-shadow:inset 1px 1px 0 #fdfdfd"></div>
<div style="left:377px;top:332px;width:1px;height:6px;background:#4a4a4a"></div>
<div style="left:378px;top:333px;width:1px;height:6px;background:rgba(255,255,255,.8)"></div>
<div style="left:380px;top:332px;width:1px;height:6px;background:#4a4a4a"></div>
<div style="left:381px;top:333px;width:1px;height:6px;background:rgba(255,255,255,.8)"></div>
<div style="left:383px;top:332px;width:1px;height:6px;background:#4a4a4a"></div>
<div style="left:384px;top:333px;width:1px;height:6px;background:rgba(255,255,255,.8)"></div>
<div style="left:253px;top:343px;width:760px;height:1px;background:#fafafa"></div>
<div style="left:1011px;top:73px;width:1px;height:271px;background:#fafafa"></div>
<div style="left:251px;top:369px;width:761px;height:188px;background:#fff;border:1px solid #898c95"></div>
<div style="left:343px;top:352px;width:59px;height:18px;border:1px solid #898c95;border-bottom:none;background:linear-gradient(#f2f2f2 0,#ebebeb 50%,#dddddd 50%,#cfcfcf 100%);box-shadow:inset 1px 1px 0 #fbfbfb"></div>
<div class="t" style="left:343px;top:355px;width:59px;text-align:center">Дод. інфо</div>
<div style="left:402px;top:352px;width:69px;height:18px;border:1px solid #898c95;border-bottom:none;background:linear-gradient(#f2f2f2 0,#ebebeb 50%,#dddddd 50%,#cfcfcf 100%);box-shadow:inset 1px 1px 0 #fbfbfb"></div>
<div class="t" style="left:402px;top:355px;width:69px;text-align:center">Фото/опис</div>
<div style="left:471px;top:352px;width:82px;height:18px;border:1px solid #898c95;border-bottom:none;background:linear-gradient(#f2f2f2 0,#ebebeb 50%,#dddddd 50%,#cfcfcf 100%);box-shadow:inset 1px 1px 0 #fbfbfb"></div>
<div class="t" style="left:471px;top:355px;width:82px;text-align:center">Комплектація</div>
<div style="left:553px;top:352px;width:52px;height:18px;border:1px solid #898c95;border-bottom:none;background:linear-gradient(#f2f2f2 0,#ebebeb 50%,#dddddd 50%,#cfcfcf 100%);box-shadow:inset 1px 1px 0 #fbfbfb"></div>
<div class="t" style="left:553px;top:355px;width:52px;text-align:center">Аналоги</div>
<div style="left:251px;top:349px;width:92px;height:21px;border:1px solid #898c95;border-bottom:none;background:#fff"></div>
<div class="t" style="left:260px;top:353px;">Дані про товар</div>
<div class="btn" style="left:830px;top:352px;width:183px;height:16px"></div>
<div class="t" style="left:829px;top:354px;width:183px;text-align:center">Додатково &lt;&lt;</div>
<div class="t" style="left:258px;top:379px;">Код</div>
<div class="inp" style="left:258px;top:391px;width:61px;height:21px"></div>
<div class="t" style="left:261px;top:395px;">00005</div>
<div class="t" style="left:320px;top:379px;">Повна назва товару</div>
<div class="inp" style="left:320px;top:391px;width:572px;height:21px"></div>
<div class="t" style="left:323px;top:395px;">Ялинка зелена (стандарт) 150 см</div>
<div class="btn" style="left:894px;top:392px;width:17px;height:19px"></div>
<div class="t" style="left:894px;top:395px;width:17px;text-align:center">...</div>
<div class="t" style="left:913px;top:379px;">Од. вимір.</div>
<div class="inp" style="left:912px;top:391px;width:94px;height:21px"></div>
<div class="t" style="left:916px;top:396px;">шт</div>
<svg style="position:absolute;left:994px;top:400px" width="7" height="4"><path d="M0 0 H7 L3.5 4 Z" fill="#000"/></svg>
<div class="t" style="left:258px;top:414px;">Прихід. ціна</div>
<div class="inp" style="left:258px;top:426px;width:68px;height:21px"></div>
<div class="t" style="left:258px;top:430px;width:65px;text-align:right">310,00</div>
<div class="t" style="left:329px;top:414px;">Валюта прих.</div>
<div class="btn" style="left:329px;top:426px;width:68px;height:21px"></div>
<div class="t" style="left:333px;top:431px;">Гривня</div>
<svg style="position:absolute;left:385px;top:435px" width="7" height="4"><path d="M0 0 H7 L3.5 4 Z" fill="#000"/></svg>
<div class="t" style="left:401px;top:414px;">Роздріб. ціна</div>
<div class="inp" style="left:401px;top:426px;width:68px;height:21px"></div>
<div class="t" style="left:401px;top:430px;width:65px;text-align:right">403,00</div>
<div class="t" style="left:470px;top:414px;">Оптова ціна</div>
<div class="inp" style="left:470px;top:426px;width:68px;height:21px"></div>
<div class="t" style="left:470px;top:430px;width:65px;text-align:right">372,00</div>
<div class="t" style="left:539px;top:414px;">Дрібний опт</div>
<div class="inp" style="left:539px;top:426px;width:68px;height:21px"></div>
<div class="t" style="left:539px;top:430px;width:65px;text-align:right">356,50</div>
<div class="t" style="left:608px;top:414px;">Цена 2</div>
<div class="inp" style="left:608px;top:426px;width:68px;height:21px"></div>
<div class="t" style="left:608px;top:430px;width:65px;text-align:right">341,00</div>
<div class="t" style="left:677px;top:414px;">Цена 3</div>
<div class="inp" style="left:677px;top:426px;width:68px;height:21px"></div>
<div class="t" style="left:677px;top:430px;width:65px;text-align:right">325,50</div>
<div class="t" style="left:747px;top:414px;">Валюта роз.</div>
<div class="btn" style="left:747px;top:426px;width:68px;height:21px"></div>
<div class="t" style="left:751px;top:431px;">Гривня</div>
<svg style="position:absolute;left:803px;top:435px" width="7" height="4"><path d="M0 0 H7 L3.5 4 Z" fill="#000"/></svg>
<div class="cb" style="left:914px;top:419px;width:13px;height:13px"></div>
<div class="t" style="left:930px;top:420px;">Акциз</div>
<div style="left:914px;top:434px;width:13px;height:13px;border:1px solid #c9c9c9;background:linear-gradient(135deg,#e6e6e6,#fbfbfb)"></div>
<div class="t" style="left:930px;top:435px;color:#8d8d8d">Послуга</div>
<div class="t" style="left:258px;top:449px;">Гарантія</div>
<div class="inp" style="left:258px;top:461px;width:93px;height:21px"></div>
<div class="t" style="left:353px;top:449px;">Мін. залишок</div>
<div class="inp" style="left:352px;top:461px;width:77px;height:21px"></div>
<div class="t" style="left:352px;top:465px;width:74px;text-align:right">10</div>
<div class="t" style="left:432px;top:449px;">Дополнительно</div>
<div class="inp" style="left:430px;top:461px;width:419px;height:21px"></div>
<div class="t" style="left:852px;top:449px;">Код УКТ ЗЕД</div>
<div class="inp" style="left:851px;top:461px;width:77px;height:21px"></div>
<div class="t" style="left:930px;top:449px;">Код пільги</div>
<div class="inp" style="left:929px;top:461px;width:77px;height:21px"></div>
<div class="t" style="left:258px;top:485px;">Фасовка</div>
<div class="inp" style="left:258px;top:497px;width:77px;height:21px"></div>
<div class="t" style="left:258px;top:501px;width:74px;text-align:right">1</div>
<div class="t" style="left:336px;top:485px;">К-ть в упак.</div>
<div class="inp" style="left:336px;top:497px;width:77px;height:21px"></div>
<div class="t" style="left:336px;top:501px;width:74px;text-align:right">1</div>
<div class="t" style="left:417px;top:485px;">Од.вим.дод.</div>
<div class="inp" style="left:414px;top:497px;width:94px;height:21px"></div>
<svg style="position:absolute;left:496px;top:506px" width="7" height="4"><path d="M0 0 H7 L3.5 4 Z" fill="#000"/></svg>
<div class="t" style="left:696px;top:485px;">Вага</div>
<div class="inp" style="left:695px;top:497px;width:77px;height:21px"></div>
<div class="t" style="left:695px;top:501px;width:74px;text-align:right">2,6</div>
<div class="t" style="left:774px;top:485px;">Довжина</div>
<div class="inp" style="left:773px;top:497px;width:77px;height:21px"></div>
<div class="t" style="left:852px;top:485px;">Ширина</div>
<div class="inp" style="left:851px;top:497px;width:77px;height:21px"></div>
<div class="t" style="left:930px;top:485px;">Висота</div>
<div class="inp" style="left:929px;top:497px;width:77px;height:21px"></div>
<div class="t" style="left:258px;top:520px;">Штрих-код виробника</div>
<div class="inp" style="left:258px;top:532px;width:125px;height:21px"></div>
<div class="t" style="left:385px;top:520px;">Штрих-код внутрішній</div>
<div class="inp" style="left:384px;top:532px;width:125px;height:21px"></div>
<div class="t" style="left:387px;top:536px;">4821000000397</div>
<div class="btn" style="left:509px;top:533px;width:19px;height:19px"></div>
<svg style="position:absolute;left:509px;top:533px" width="19" height="19" viewBox="0 0 19 19"><defs><pattern id="ck" width="2" height="2" patternUnits="userSpaceOnUse"><rect width="2" height="2" fill="#fff"/><rect width="1" height="1" fill="#000"/><rect x="1" y="1" width="1" height="1" fill="#000"/></pattern></defs><rect x="2.5" y="7.5" width="11" height="9" fill="#fffef0" stroke="#909090"/><path d="M2 16.5 H14.5 V7.5" fill="none" stroke="#0000a0" stroke-width="1.2"/><path d="M4 10 H4.8 M4 12.5 H4.8 M4 14.5 H4.8 M6 10 H12 M6 12.5 H12 M6 14.5 H12" stroke="#0000ff" stroke-width="1.1"/><path d="M4.5 8.5 L9 4 H15.5 L16.5 5.5 L12 10 L8 11 Z" fill="url(#ck)"/><path d="M9 3.5 H15.5" stroke="#000" stroke-width="1"/><rect x="15.5" y="3" width="2.5" height="5" fill="#0000ff"/><rect x="16.5" y="4.5" width="1" height="1.5" fill="#fff"/></svg>
<div class="t" style="left:533px;top:520px;">Тип ПДВ</div>
<div class="btn" style="left:532px;top:532px;width:96px;height:21px"></div>
<div class="t" style="left:536px;top:537px;">Звичайний</div>
<svg style="position:absolute;left:616px;top:541px" width="7" height="4"><path d="M0 0 H7 L3.5 4 Z" fill="#000"/></svg>
<div class="t" style="left:630px;top:520px;">Виробник</div>
<div class="inp" style="left:629px;top:532px;width:241px;height:21px"></div>
<div class="t" style="left:632px;top:536px;">Україна</div>
<div class="cb" style="left:875px;top:525px;width:13px;height:13px"></div>
<div class="t" style="left:891px;top:526px;">Приховувати в прайсі</div>
<div class="cb" style="left:875px;top:540px;width:13px;height:13px"></div>
<div class="t" style="left:891px;top:541px;">Ігнорувати знижку</div>
<div class="btn" style="left:253px;top:560px;width:73px;height:23px"></div>
<div class="t" style="left:254px;top:566px;width:73px;text-align:center">Запам'ятати</div>
<div class="btn" style="left:329px;top:560px;width:73px;height:23px"></div>
<div class="t" style="left:330px;top:566px;width:73px;text-align:center">Відміна</div>
<div class="btnh" style="left:404px;top:560px;width:73px;height:23px"></div>
<div class="t" style="left:405px;top:566px;width:73px;text-align:center">Редагування</div>
<div class="btn" style="left:479px;top:560px;width:73px;height:23px"></div>
<div class="t" style="left:480px;top:566px;width:73px;text-align:center">Видалити</div>
<div class="btn" style="left:940px;top:560px;width:73px;height:23px"></div>
<div class="t" style="left:941px;top:566px;width:73px;text-align:center">Закінчити</div>
</body></html>
